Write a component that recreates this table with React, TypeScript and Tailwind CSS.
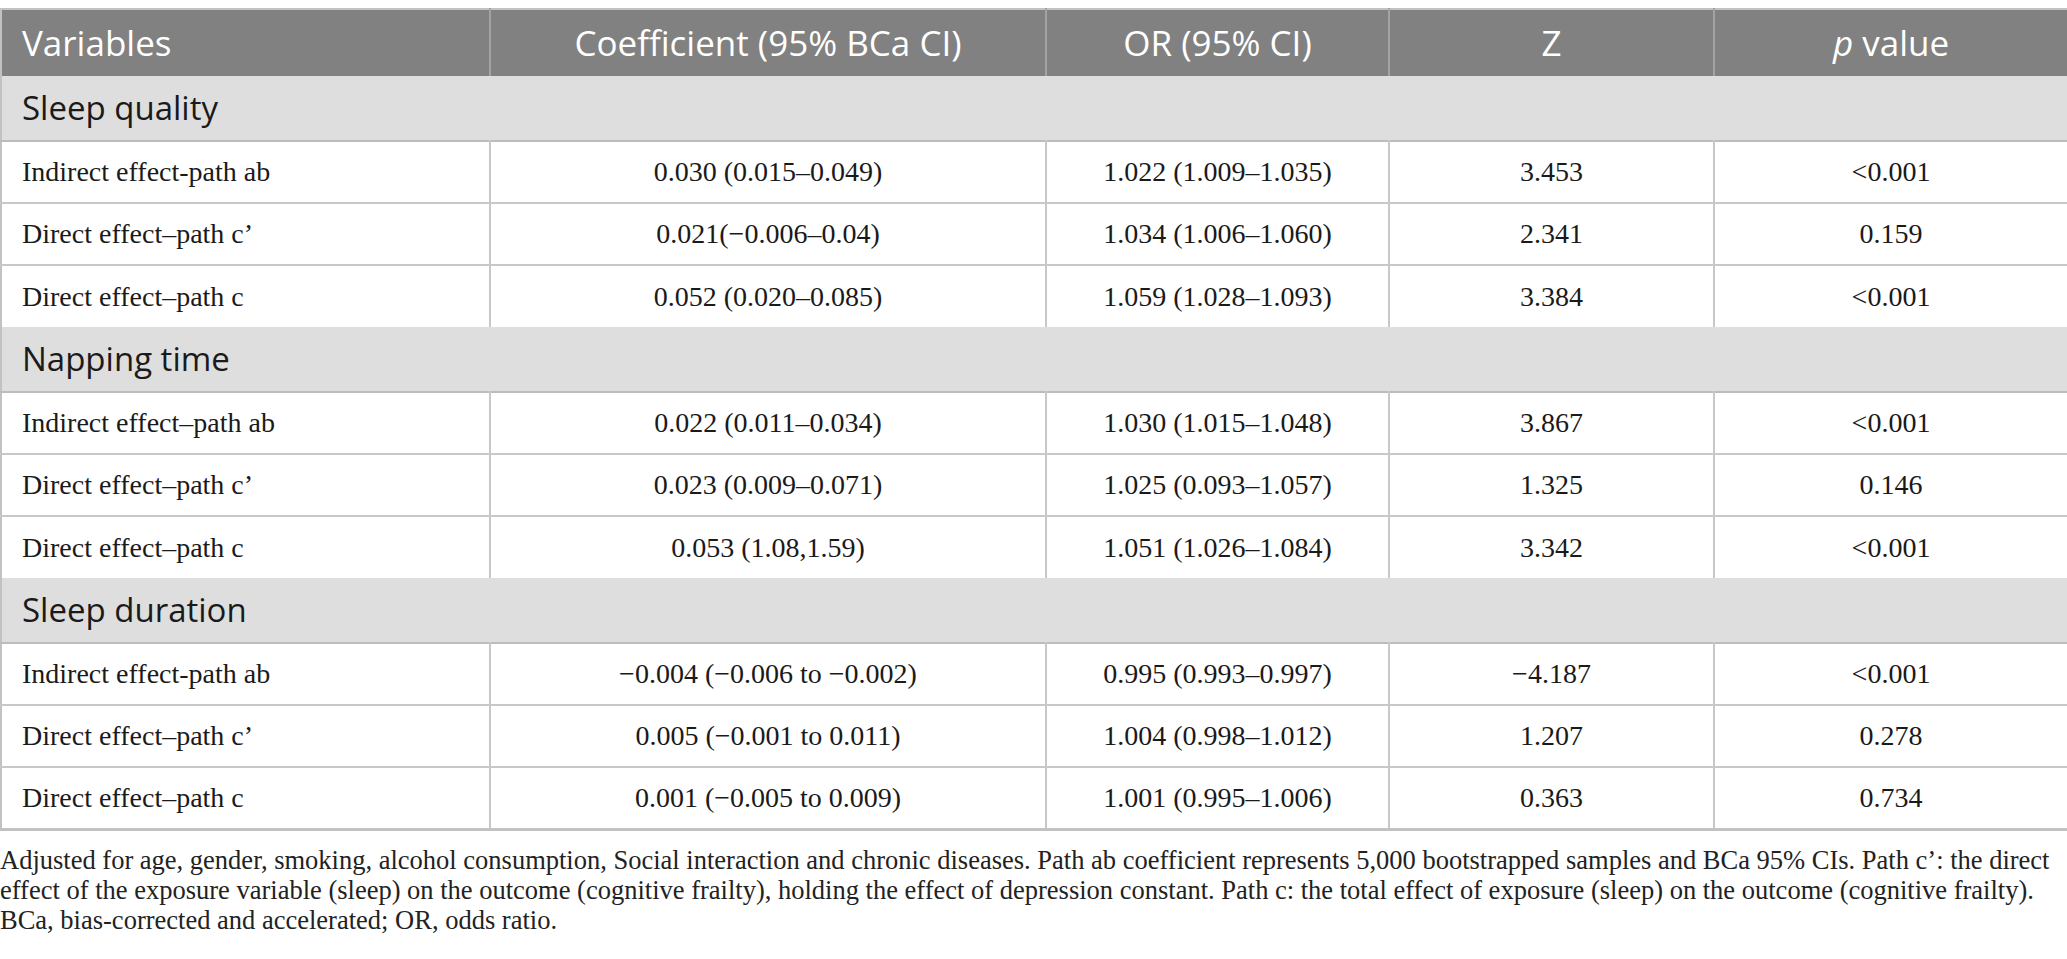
const sans = "font-['Open_Sans','Noto_Sans',sans-serif]"
const serif = "font-['Liberation_Serif','Times_New_Roman',serif]"

type Row = [string, string, string, string, string]

const sections: { title: string; rows: Row[] }[] = [
  {
    title: "Sleep quality",
    rows: [
      ["Indirect effect-path ab", "0.030 (0.015–0.049)", "1.022 (1.009–1.035)", "3.453", "<0.001"],
      ["Direct effect–path c’", "0.021(−0.006–0.04)", "1.034 (1.006–1.060)", "2.341", "0.159"],
      ["Direct effect–path c", "0.052 (0.020–0.085)", "1.059 (1.028–1.093)", "3.384", "<0.001"],
    ],
  },
  {
    title: "Napping time",
    rows: [
      ["Indirect effect–path ab", "0.022 (0.011–0.034)", "1.030 (1.015–1.048)", "3.867", "<0.001"],
      ["Direct effect–path c’", "0.023 (0.009–0.071)", "1.025 (0.093–1.057)", "1.325", "0.146"],
      ["Direct effect–path c", "0.053 (1.08,1.59)", "1.051 (1.026–1.084)", "3.342", "<0.001"],
    ],
  },
  {
    title: "Sleep duration",
    rows: [
      ["Indirect effect-path ab", "−0.004 (−0.006 to −0.002)", "0.995 (0.993–0.997)", "−4.187", "<0.001"],
      ["Direct effect–path c’", "0.005 (−0.001 to 0.011)", "1.004 (0.998–1.012)", "1.207", "0.278"],
      ["Direct effect–path c", "0.001 (−0.005 to 0.009)", "1.001 (0.995–1.006)", "0.363", "0.734"],
    ],
  },
]

export default function App() {
  return (
    <div className="w-[2067px] min-h-[959px] bg-white pt-[8px]">
      <table className="w-full table-fixed border-collapse border-l-2 border-t-2 border-b-[3px] border-[#c2c2c2]">
        <colgroup>
          <col className="w-[489px]" />
          <col className="w-[556px]" />
          <col className="w-[343px]" />
          <col className="w-[325px]" />
          <col />
        </colgroup>
        <thead>
          <tr className={`h-[67px] bg-[#808180] text-white text-[35px] ${sans}`}>
            <th className="text-left font-normal pl-[20px]">Variables</th>
            <th className="font-normal border-l-2 border-[#a3a3a3]">Coefficient (95% BCa CI)</th>
            <th className="font-normal border-l-2 border-[#a3a3a3]">OR (95% CI)</th>
            <th className="font-normal border-l-2 border-[#a3a3a3]">Z</th>
            <th className="font-normal border-l-2 border-[#a3a3a3]">
              <span className="italic">p</span> value
            </th>
          </tr>
        </thead>
        <tbody>
          {sections.map(s => (
            <Section key={s.title} title={s.title} rows={s.rows} />
          ))}
        </tbody>
      </table>
      <div className={`${serif} text-[26.5px] leading-[30px] text-[#222] pt-[14px] whitespace-nowrap`}>
        <div>Adjusted for age, gender, smoking, alcohol consumption, Social interaction and chronic diseases. Path ab coefficient represents 5,000 bootstrapped samples and BCa 95% CIs. Path c’: the direct</div>
        <div>effect of the exposure variable (sleep) on the outcome (cognitive frailty), holding the effect of depression constant. Path c: the total effect of exposure (sleep) on the outcome (cognitive frailty).</div>
        <div>BCa, bias-corrected and accelerated; OR, odds ratio.</div>
      </div>
    </div>
  )
}

function Section({ title, rows }: { title: string; rows: Row[] }) {
  return (
    <>
      <tr className="h-[65px] bg-[#dfdedf] border-b-2 border-[#bcbcbc]">
        <td colSpan={5} className={`${sans} text-[33px] text-[#1a1a1a] pl-[20px]`}>{title}</td>
      </tr>
      {rows.map((r, i) => (
        <tr key={i} className={`h-[62px] ${serif} text-[28px] text-[#1a1a1a] ${i < rows.length - 1 ? "border-b-2 border-[#c8c8c8]" : ""}`}>
          <td className="pl-[20px]">{r[0]}</td>
          {r.slice(1).map((c, j) => (
            <td key={j} className="text-center border-l-2 border-[#c8c8c8]">{c}</td>
          ))}
        </tr>
      ))}
    </>
  )
}
